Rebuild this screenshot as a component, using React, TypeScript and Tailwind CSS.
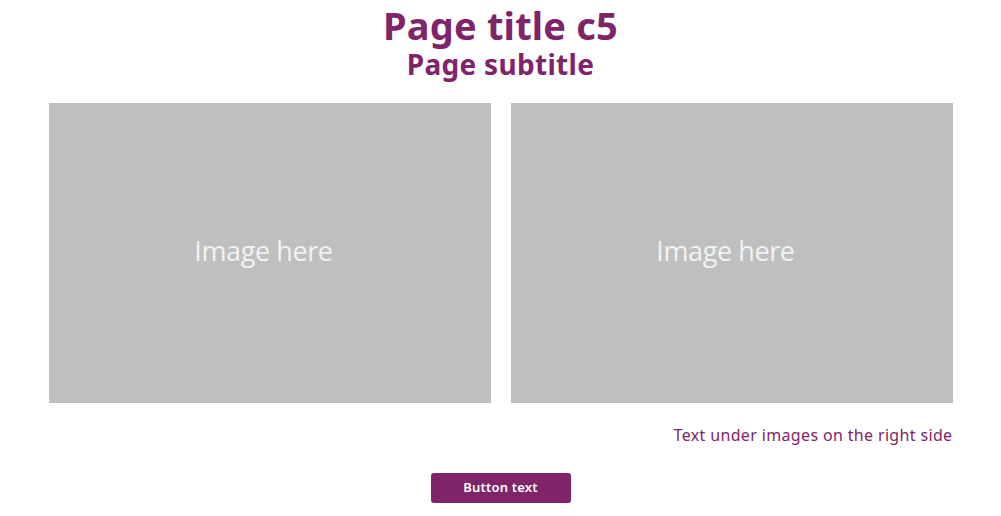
export default function App() {
  const purple = "text-[#80246a]";
  return (
    <div className="min-h-screen w-full bg-white font-['Noto_Sans',sans-serif]">
      <div className="mx-auto w-[904px] flex flex-col items-center pt-[2px]">
        {/* Heading */}
        <h1 className={`${purple} text-[38px] leading-[46px] font-bold tracking-[0.2px]`}>Page title c5</h1>
        <h2 className={`${purple} text-[28px] leading-[32px] font-bold tracking-[0.3px]`}>Page subtitle</h2>

        {/* Image placeholders */}
        <div className="mt-[23px] grid grid-cols-2 gap-5 w-full">
          {[0, 1].map((i) => (
            <div
              key={i}
              className="h-[300px] bg-[#bfbfbf] flex items-center justify-center pr-3 pb-1"
            >
              <span className="text-[#f2f2f2] text-[27px] font-['Open_Sans',sans-serif] tracking-[-0.4px]">
                Image here
              </span>
            </div>
          ))}
        </div>

        {/* Caption */}
        <p className={`${purple} self-end mt-[22px] text-[16px] leading-[20px] tracking-[0.35px]`}>
          Text under images on the right side
        </p>

        {/* Button */}
        <button className="mt-[28px] w-[140px] h-[30px] rounded-[3px] bg-[#80246a] text-white text-[13px] font-semibold tracking-[0.2px]">
          Button text
        </button>
      </div>
    </div>
  );
}
